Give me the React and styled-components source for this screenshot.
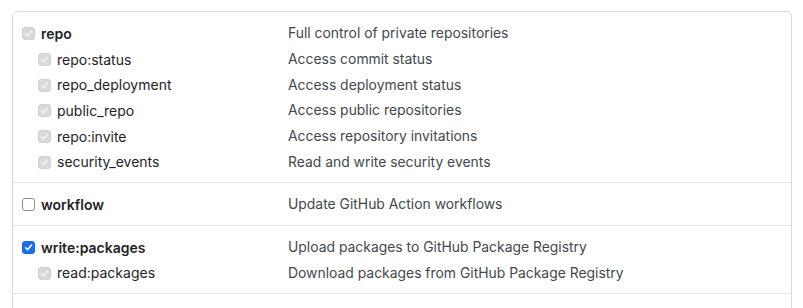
import React from "react";
import styled, { createGlobalStyle } from "styled-components";

const GlobalStyle = createGlobalStyle`
  html, body {
    margin: 0;
    padding: 0;
    background: #fff;
    overflow: hidden;
  }
  body {
    font-family: Inter, "Liberation Sans", Arial, sans-serif;
    -webkit-font-smoothing: antialiased;
  }
`;

const Page = styled.div`
  padding: 11px 11px 0 12px;
`;

const Box = styled.div`
  border: 1px solid #d8dadd;
  border-radius: 6px;
  background: #fff;
`;

const Section = styled.div`
  padding: 8.5px 0 7.5px;
  min-height: ${p => (p.empty ? 30 : 0)}px;
  border-top: ${p => (p.first ? "none" : "1px solid #e3e5e8")};
`;

const Row = styled.div`
  display: grid;
  grid-template-columns: 266px 1fr;
  align-items: center;
  height: 25.7px;
  padding-left: ${p => (p.sub ? 25 : 9)}px;
`;

const Label = styled.label`
  display: flex;
  align-items: center;
  gap: 6px;
  font-size: 14px;
  font-weight: ${p => (p.sub ? 400 : 600)};
  color: #1f2328;
`;

const Desc = styled.span`
  font-size: 13.9px;
  color: #43484d;
  margin-left: ${p => (p.sub ? -16 : 0)}px;
`;

const Box13 = styled.span`
  display: inline-flex;
  align-items: center;
  justify-content: center;
  width: 13px;
  height: 13px;
  box-sizing: border-box;
  border-radius: 3px;
  flex: none;
  margin-top: 1px;
  ${p =>
    p.state === "on"
      ? "background: #1a6ff0; border: 1px solid #1566e0;"
      : p.state === "off"
      ? "background: #fff; border: 1px solid #8d8f93;"
      : "background: #d9d9d9; border: 1px solid #d2d2d2;"}
`;

const Check = ({ state }) => (
  <Box13 state={state}>
    {state !== "off" && (
      <svg width="9" height="9" viewBox="0 0 9 9">
        <path
          d="M1.6 4.8 L3.6 6.8 L7.5 2"
          fill="none"
          stroke={state === "on" ? "#fff" : "#f2f2f2"}
          strokeWidth="1.6"
          strokeLinecap="round"
          strokeLinejoin="round"
        />
      </svg>
    )}
  </Box13>
);

const sections = [
  [
    { name: "repo", desc: "Full control of private repositories", state: "dis" },
    { name: "repo:status", desc: "Access commit status", sub: true },
    { name: "repo_deployment", desc: "Access deployment status", sub: true },
    { name: "public_repo", desc: "Access public repositories", sub: true },
    { name: "repo:invite", desc: "Access repository invitations", sub: true },
    { name: "security_events", desc: "Read and write security events", sub: true },
  ],
  [{ name: "workflow", desc: "Update GitHub Action workflows", state: "off" }],
  [
    { name: "write:packages", desc: "Upload packages to GitHub Package Registry", state: "on" },
    { name: "read:packages", desc: "Download packages from GitHub Package Registry", sub: true },
  ],
  [],
];

export default function App() {
  return (
    <Page>
      <GlobalStyle />
      <Box>
        {sections.map((rows, i) => (
          <Section key={i} first={i === 0} empty={rows.length === 0}>
            {rows.map(r => (
              <Row key={r.name} sub={r.sub}>
                <Label sub={r.sub}>
                  <Check state={r.sub ? "dis" : r.state} />
                  {r.name}
                </Label>
                <Desc sub={r.sub}>{r.desc}</Desc>
              </Row>
            ))}
          </Section>
        ))}
      </Box>
    </Page>
  );
}
